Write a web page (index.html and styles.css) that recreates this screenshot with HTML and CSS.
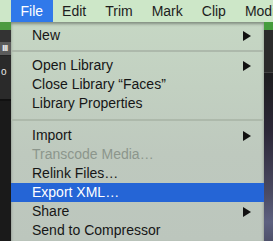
FILE: index.html
```html
<!DOCTYPE html>
<html lang="en">
<head>
    <meta charset="UTF-8">
    <meta name="viewport" content="width=device-width, initial-scale=1.0">
    <title>File Menu</title>
    <link rel="stylesheet" href="styles.css">
</head>
<body>
    <div class="screen">
        <div class="menubar">
            <span class="menu-title active">File</span>
            <span class="menu-title">Edit</span>
            <span class="menu-title">Trim</span>
            <span class="menu-title">Mark</span>
            <span class="menu-title">Clip</span>
            <span class="menu-title">Modify</span>
        </div>

        <div class="workspace">
            <div class="app-left">
                <div class="strip green"></div>
                <div class="strip toolbar"></div>
                <div class="strip tools"><span class="ticks">ııı</span></div>
                <div class="strip panel"><span class="knob">o</span></div>
                <div class="strip dark"></div>
            </div>

            <ul class="menu">
                <li class="item has-sub">New</li>
                <li class="separator"></li>
                <li class="item has-sub">Open Library</li>
                <li class="item">Close Library “Faces”</li>
                <li class="item">Library Properties</li>
                <li class="separator wide"></li>
                <li class="item has-sub">Import</li>
                <li class="item disabled">Transcode Media…</li>
                <li class="item">Relink Files…</li>
                <li class="item selected">Export XML…</li>
                <li class="item has-sub">Share</li>
                <li class="item">Send to Compressor</li>
            </ul>

            <div class="app-right"></div>
        </div>
    </div>
</body>
</html>
```

FILE: styles.css
```css
body {
    margin: 0;
    padding: 0;
    font-family: "Liberation Sans", Arial, sans-serif;
    font-size: 14px;
    background: #1b1b1b;
    overflow: hidden;
}

.screen {
    width: 273px;
    height: 241px;
    display: flex;
    flex-direction: column;
    overflow: hidden;
}

/* Top menu bar */
.menubar {
    height: 22px;
    flex: none;
    display: flex;
    align-items: center;
    padding-left: 11px;
    background: #cde7c8;
    color: #1d1d1d;
    white-space: nowrap;
    overflow: hidden;
    position: relative;
    z-index: 2;
}

.menu-title {
    height: 22px;
    line-height: 22px;
    padding: 0 9.5px;
}

.menu-title.active {
    background: #3079ea;
    color: white;
}

/* Area under the bar */
.workspace {
    flex: 1;
    display: flex;
    min-height: 0;
}

.app-left {
    width: 11px;
    flex: none;
    display: flex;
    flex-direction: column;
}

.strip {
    overflow: hidden;
    color: #e8e8e8;
    font-size: 10px;
    line-height: 12px;
}

.strip.green {
    height: 8px;
    background: #4c9a40;
}

.strip.toolbar {
    height: 12px;
    background: #333333;
}

.strip.tools {
    height: 13px;
    background: #5b5b5b;
    border-bottom: 1px solid #222;
}

.ticks {
    display: block;
    margin-left: 2px;
    font-weight: bold;
    letter-spacing: -1px;
}

.strip.panel {
    height: 43px;
    background: #2a2a2a;
    border-bottom: 2px solid #111;
}

.knob {
    display: block;
    margin: 10px 0 0 1px;
}

.strip.dark {
    flex: 1;
    background: #1a1a1a;
}

/* Dropdown */
.menu {
    width: 253px;
    flex: none;
    list-style: none;
    margin: 0;
    padding: 4px 0 0;
    background: linear-gradient(#c6d7c4, #bec9be 60%, #bcc6bd);
    color: #161616;
    box-shadow: 0 2px 3px rgba(0, 0, 0, 0.35) inset;
}

.item {
    height: 19px;
    line-height: 19px;
    padding-left: 21px;
    position: relative;
    white-space: nowrap;
}

.item.has-sub::after {
    content: "";
    position: absolute;
    right: 13px;
    top: 5px;
    border-left: 8px solid #111;
    border-top: 5px solid transparent;
    border-bottom: 5px solid transparent;
}

.item.disabled {
    color: #8c968c;
}

.item.selected {
    background: #2565d6;
    color: white;
}

.separator {
    height: 11px;
    display: flex;
    align-items: center;
}

.separator::before {
    content: "";
    flex: 1;
    height: 2px;
    background: #adb9ab;
}

.separator.wide {
    height: 13px;
}

.app-right {
    flex: 1;
    background: linear-gradient(#459c3c 0, #459c3c 8px, #2b2b2b 8px, #2b2b2b 50px, #444 50px, #444 51px, #1d1d1f 51px, #2c2838 110px, #4a4a62 170px, #5d6180 200px, #3e3e52 241px);
}
```
